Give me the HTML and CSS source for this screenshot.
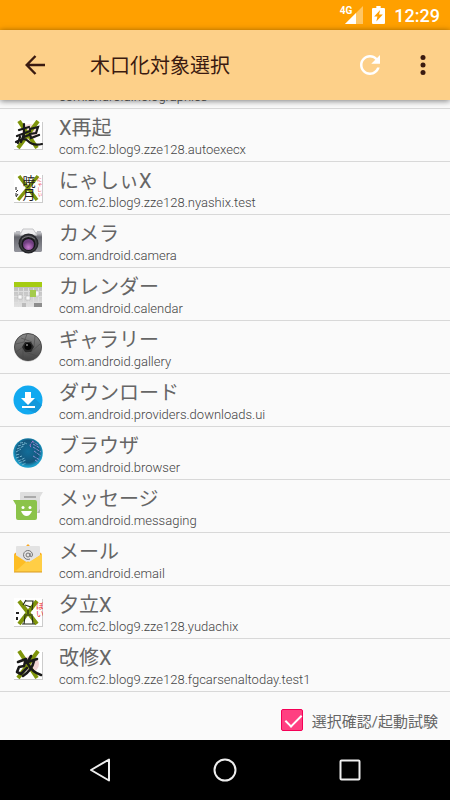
FILE: index.html
```html
<!DOCTYPE html>
<html lang="ja">
<head>
	<meta charset="utf-8">
	<meta name="viewport" content="width=device-width, initial-scale=1">
	<title>木口化対象選択</title>
	<link rel="stylesheet" href="styles.css">
</head>
<body>
	<div class="statusbar">
		<div class="signal">
			<span class="network">4G</span>
			<svg width="18" height="18" viewBox="0 0 18 18">
				<path d="M18 0V18H0Z" fill="#ffc664"/>
				<path d="M11 7V18H0Z" fill="#fff"/>
			</svg>
		</div>
		<svg width="13" height="18" viewBox="0 0 12 18" preserveAspectRatio="none">
			<path d="M4 0h4v2h3a1 1 0 0 1 1 1v14a1 1 0 0 1-1 1H1a1 1 0 0 1-1-1V3a1 1 0 0 1 1-1h3z" fill="#fff"/>
			<path d="M7.500 4L2 10.500H5L4 15.500L10 8.500H6.500Z" fill="#ffa000"/>
		</svg>
		<span class="clock">12:29</span>
	</div>
	<header class="toolbar">
		<button class="icon-btn" aria-label="戻る">
			<svg width="20" height="20" viewBox="0 0 20 20" fill="none" stroke="#3a1a10" stroke-width="2.400">
				<path d="M20 10H2M10.500 1L1.700 10L10.500 19"/>
			</svg>
		</button>
		<h1>木口化対象選択</h1>
		<button class="icon-btn" aria-label="更新">
			<svg width="20" height="20" viewBox="4 4 16 16" fill="#fff">
				<path d="M17.650 6.350C16.200 4.900 14.210 4 12 4c-4.420 0-7.990 3.580-7.990 8s3.570 8 7.990 8c3.730 0 6.840-2.550 7.730-6h-2.080c-.82 2.330-3.040 4-5.650 4-3.310 0-6-2.690-6-6s2.690-6 6-6c1.660 0 3.140.69 4.220 1.780L13 11h7V4l-2.350 2.350z"/>
			</svg>
		</button>
		<button class="icon-btn" aria-label="メニュー">
			<svg width="6" height="20" viewBox="0 0 6 20" fill="#3a1a10">
				<circle cx="3" cy="2.500" r="2.500"/><circle cx="3" cy="10" r="2.500"/><circle cx="3" cy="17.500" r="2.500"/>
			</svg>
		</button>
	</header>

	<ul class="apps" id="apps">
		<li class="app">
			<svg class="icon" viewBox="0 0 30 30"><rect x="1" y="1" width="28" height="28" fill="#fff"/></svg>
			<div class="info"><h2>X</h2><p>com.android.holographics</p></div>
		</li>
		<li class="app">
			<svg class="icon" viewBox="0 0 30 30">
				<rect x="1" y="2" width="29" height="28" fill="#ccc"/>
				<rect x="1" y="1" width="28" height="28" fill="#fff"/>
				<circle cx="17" cy="12" r="8" fill="#f7dcdc"/>
				<path d="M6 1L24 28M25 1L5 28" stroke="#7f950b" stroke-width="4"/>
				<path d="M6 10L16 7M11 4L11 15M4 16L17 11M11 14L8 22M7 17L5 23M11 17L16 15M17 9L25 7L23 13L17 14L18 18L26 15M3 22Q11 17 15 21Q20 26 29 24" fill="none" stroke="#191919" stroke-width="2.200" stroke-linecap="round"/>
			</svg>
			<div class="info"><h2>X再起</h2><p>com.fc2.blog9.zze128.autoexecx</p></div>
		</li>
		<li class="app">
			<svg class="icon" viewBox="0 0 30 30">
				<rect x="1" y="2" width="29" height="28" fill="#ccc"/>
				<rect x="1" y="1" width="28" height="28" fill="#fff"/>
				<path d="M6 3L24 27M25 3L5 27" stroke="#7f950b" stroke-width="3.500"/>
				<text class="kanji" x="15" y="2">暁月</text>
				<text class="kana" x="26" y="4">にゃしぃ</text>
				<path d="M3 14v3M5 17l-2 2M3 20v3M5 21l-2 3" stroke="#222" fill="none"/>
			</svg>
			<div class="info"><h2>にゃしぃX</h2><p>com.fc2.blog9.zze128.nyashix.test</p></div>
		</li>
		<li class="app">
			<svg class="icon" viewBox="0 0 30 30">
				<defs>
					<linearGradient id="camera-body" x2="0" y2="1"><stop stop-color="#d8d8db"/><stop offset=".25" stop-color="#64656c"/><stop offset="1" stop-color="#94959d"/></linearGradient>
					<radialGradient id="lens" cy=".75"><stop stop-color="#c87bcf"/><stop offset="1" stop-color="#703f80"/></radialGradient>
				</defs>
				<path d="M1 6H10V26H2L1 25Z" fill="url(#camera-body)"/>
				<path d="M20 6H28L29 7V25L28 26H20Z" fill="url(#camera-body)"/>
				<path d="M3 5h4v2H3zM24 5h4v2H24z" fill="#b9bac0"/>
				<path d="M7 9L10 3H20L24 9Z" fill="#eeeeef" stroke="#c4c4c7"/>
				<circle cx="15.500" cy="17.500" r="10" fill="#25262a"/>
				<circle cx="15.500" cy="17.500" r="8.500" fill="#3e3e43"/>
				<circle cx="15.500" cy="18" r="7" fill="#17171b"/>
				<circle cx="15.500" cy="18.500" r="5.500" fill="url(#lens)"/>
				<path d="M9 13Q15 8 22 13" fill="none" stroke="#77777b"/>
			</svg>
			<div class="info"><h2>カメラ</h2><p>com.android.camera</p></div>
		</li>
		<li class="app">
			<svg class="icon" viewBox="0 0 30 30">
				<defs>
					<linearGradient id="paper" x2="0" y2="1"><stop stop-color="#b4b4b4"/><stop offset="1" stop-color="#e2e2e2"/></linearGradient>
				</defs>
				<rect x="1" y="3" width="28" height="25" fill="url(#paper)"/>
				<path d="M1 12.500h28M1 17.500h28M1 23.500h28M5.500 9v19M10.500 9v19M15.500 9v19M20.500 9v19M25.500 9v19" stroke="#dedede"/>
				<rect x="1" y="3" width="28" height="5" fill="#a5cc12"/>
				<path d="M5 16h4v4H5zM13 17h4v4h-4zM22 12h4v5h-4z" fill="#fafafa" stroke="#aaa" stroke-width=".5"/>
				<rect x="17" y="11" width="6" height="7" fill="#a4cb4c"/>
				<path d="M21 24h8v4h-8z" fill="#8d8d8d"/><path d="M9 24h4v4H9z" fill="#bbb"/>
			</svg>
			<div class="info"><h2>カレンダー</h2><p>com.android.calendar</p></div>
		</li>
		<li class="app">
			<svg class="icon" viewBox="0 0 30 30">
				<defs>
					<linearGradient id="shutter" x2="0" y2="1"><stop stop-color="#888"/><stop offset="1" stop-color="#444"/></linearGradient>
				</defs>
				<circle cx="15" cy="15.500" r="14" fill="#bbb"/>
				<circle cx="15" cy="15" r="13.500" fill="url(#shutter)" stroke="#4a4a4a"/>
				<path d="M11 10L14 2M19 10L8 6M21 15L22 4M18 20L27 12M12 20L24 24M10 15L10 27M10 15L3 20M11 10L3 12" stroke="#484848" stroke-width=".6"/>
				<path d="M12 10h6l3 5-3 5h-6l-3-5z" fill="#2a2a2a"/>
				<circle cx="15" cy="14.500" r="3.500" fill="#050505"/><circle cx="14" cy="13" r="1" fill="#888"/>
			</svg>
			<div class="info"><h2>ギャラリー</h2><p>com.android.gallery</p></div>
		</li>
		<li class="app">
			<svg class="icon" viewBox="0 0 30 30">
				<circle cx="15" cy="15" r="14.500" fill="#11a9f0"/>
				<path d="M21 13L29 20Q26 26 22 28L9 22Z" fill="#1298db"/>
				<path d="M12 7h6v6h4l-7 7-7-7h4zM9 21h13v2H9z" fill="#fff"/>
			</svg>
			<div class="info"><h2>ダウンロード</h2><p>com.android.providers.downloads.ui</p></div>
		</li>
		<li class="app">
			<svg class="icon" viewBox="0 0 30 30">
				<defs>
					<radialGradient id="globe" cy=".45"><stop stop-color="#126e9a"/><stop offset=".75" stop-color="#14567c"/><stop offset="1" stop-color="#1c9dc9"/></radialGradient>
				</defs>
				<circle cx="15" cy="15" r="14.800" fill="url(#globe)"/>
				<g fill="none" stroke-dasharray="3 1">
					<path d="M7 5Q11 4 14 6M5 8L12 6M4 11L11 8M3 14L8 11M3 17L7 16M3 20L9 18M5 23L12 20M6 25L13 22M9 27L13 25" stroke="#75b5cf"/>
					<path d="M19 3L25 7M20 6L27 10M20 9L28 14M21 13L28 18M20 18L27 22M22 22L25 24" stroke="#8d91d5"/>
					<path d="M20 3L17 7L18 10" stroke="#ad77cf"/>
				</g>
			</svg>
			<div class="info"><h2>ブラウザ</h2><p>com.android.browser</p></div>
		</li>
		<li class="app">
			<svg class="icon" viewBox="0 0 30 30">
				<path d="M7 2Q7 1 8 1H30L27 6V21Q27 22 26 22H7Z" fill="#dedede"/>
				<path d="M24 22L27 18V21Q27 22 26 22Z" fill="#bbb"/>
				<path d="M11 5h12v2H11z" fill="#aaa"/>
				<path d="M0 9H22Q24 9 24 11V27Q24 29 22 29H5Q3 29 3 27V14Z" fill="#8bc34a"/>
				<circle cx="10" cy="16.500" r="1.500" fill="#fff"/><circle cx="17" cy="16.500" r="1.500" fill="#fff"/>
				<path d="M8 20h11Q17 25 13.500 25T8 20z" fill="#fff"/>
			</svg>
			<div class="info"><h2>メッセージ</h2><p>com.android.messaging</p></div>
		</li>
		<li class="app">
			<svg class="icon" viewBox="0 0 30 30">
				<path d="M12 3L15 0L18 3V5H12ZM1 10L5 7V15ZM29 10L25 7V15Z" fill="#f9a825"/>
				<rect x="3" y="2" width="24" height="22" rx="1" fill="#e3e3e3"/>
				<path d="M1 10L15 19L1 28Z" fill="#fdbd24"/>
				<path d="M29 10L15 19L29 28Z" fill="#ffca3c"/>
				<path d="M1 28L13 18Q15 17 17 18L29 28Z" fill="#fdc52f"/>
				<path d="M13 18L15 19L29 10V28H2Z" fill="#ffce45"/>
				<path d="M1 28h28" stroke="#d99a21"/>
				<circle cx="15" cy="11" r="2" fill="none" stroke="#777"/>
				<path d="M17 9v3q2 2 2.500-1A4.500 4.500 0 1 0 17 15" fill="none" stroke="#777"/>
			</svg>
			<div class="info"><h2>メール</h2><p>com.android.email</p></div>
		</li>
		<li class="app">
			<svg class="icon" viewBox="0 0 30 30">
				<rect x="1" y="2" width="29" height="28" fill="#ccc"/>
				<rect x="1" y="1" width="28" height="28" fill="#fff"/>
				<path d="M6 4L24 27M24 4L6 27" stroke="#7f950b" stroke-width="4"/>
				<path d="M13 3L10 8M12 4H20L19 13M12 8L18 10M15 13V17M11 18H20M12 19L11 27M19 19L20 27M9 27H22" fill="none" stroke="#252b1a" stroke-width="1.200"/>
				<text class="kana yudachi" x="26" y="5">ぽい</text>
				<path d="M3 15h3v2H3zM3 20h2v3H3z" fill="#222"/>
			</svg>
			<div class="info"><h2>夕立X</h2><p>com.fc2.blog9.zze128.yudachix</p></div>
		</li>
		<li class="app">
			<svg class="icon" viewBox="0 0 30 30">
				<rect x="1" y="2" width="29" height="28" fill="#ccc"/>
				<rect x="1" y="1" width="28" height="28" fill="#fff"/>
				<circle cx="18" cy="14" r="8" fill="#f0d4d4"/>
				<path d="M6 1L24 28M25 1L5 28" stroke="#7f950b" stroke-width="4"/>
				<path d="M5 12L13 9L11 16L6 17L4 22L8 24L14 18M18 6L14 13M15 12L24 9M21 11Q19 20 10 26M15 14Q19 22 28 25" fill="none" stroke="#191919" stroke-width="2.600" stroke-linecap="round" stroke-linejoin="round"/>
			</svg>
			<div class="info"><h2>改修X</h2><p>com.fc2.blog9.zze128.fgcarsenaltoday.test1</p></div>
		</li>
		<li class="app">
			<svg class="icon" viewBox="0 0 30 30"><rect x="1" y="1" width="28" height="28" fill="#fff"/></svg>
			<div class="info"><h2>時計</h2><p>com.android.deskclock</p></div>
		</li>
	</ul>

	<div class="confirm">
		<input type="checkbox" id="launch-test" checked>
		<label for="launch-test">選択確認/起動試験</label>
	</div>
	<nav class="navbar">
		<button aria-label="戻る"><svg width="24" height="24" viewBox="0 0 24 24"><path d="M21 1.500V22.500L3 12Z"/></svg></button>
		<button aria-label="ホーム"><svg width="24" height="24" viewBox="0 0 24 24"><circle cx="12" cy="12" r="10.500"/></svg></button>
		<button aria-label="最近"><svg width="24" height="24" viewBox="0 0 24 24"><rect x="2.500" y="2.500" width="19" height="19" rx="1"/></svg></button>
	</nav>

	<script>
		document.getElementById("apps").scrollTop = 44;
	</script>
</body>
</html>
```
FILE: styles.css
```css
* {
	box-sizing: border-box;
}
body {
	margin: 0;
	height: 100vh;
	display: flex;
	flex-direction: column;
	background-color: #fafafa;
	font-family: Roboto, "Noto Sans CJK JP", sans-serif;
}
button {
	padding: 0;
	border: 0;
	background: none;
	display: flex;
	align-items: center;
	justify-content: center;
}
.statusbar {
	flex: none;
	height: 30px;
	padding-right: 10px;
	display: flex;
	align-items: center;
	justify-content: flex-end;
	gap: 9px;
	background-color: #ffa000;
	color: #fff;
}
.signal {
	position: relative;
	display: flex;
}
.network {
	position: absolute;
	right: 11px;
	top: -1px;
	font-size: 10px;
	line-height: 12px;
	font-weight: bold;
}
.clock {
	font-size: 18px;
	font-weight: 500;
}
.toolbar {
	flex: none;
	z-index: 1;
	height: 70px;
	padding: 0 8px 0 15px;
	display: flex;
	align-items: center;
	background-color: #fdd089;
	box-shadow: 0 1px 6px rgba(0,0,0,0.5);
}
.toolbar h1 {
	flex: 1;
	margin: 0 0 0 36px;
	padding-top: 2px;
	font-size: 20px;
	line-height: 30px;
	font-weight: 400;
	color: #3a1a10;
}
.icon-btn {
	width: 39px;
	height: 48px;
}
.icon-btn:last-child {
	margin-left: 14px;
}
.apps {
	flex: 1;
	min-height: 0;
	margin: 0;
	padding: 0;
	list-style: none;
	overflow-y: auto;
	scrollbar-width: none;
}
.app {
	height: 53px;
	padding: 0 13px;
	display: flex;
	align-items: center;
	gap: 16px;
	border-bottom: 1px solid #d8d8d8;
}
.icon {
	flex: none;
	width: 30px;
	height: 30px;
}
.info {
	min-width: 0;
	padding-top: 3px;
	white-space: nowrap;
}
.info h2 {
	margin: 0;
	font-size: 20px;
	line-height: 26px;
	font-weight: 400;
	color: #666;
}
.info p {
	margin: 0;
	font-size: 13px;
	line-height: 18px;
	font-weight: 300;
	color: #444;
}
.kanji {
	font-size: 13px;
	fill: #222;
	writing-mode: vertical-rl;
}
.kana {
	font-size: 5px;
	fill: #e33;
	writing-mode: vertical-rl;
}
.yudachi {
	font-size: 8px;
}
.confirm {
	flex: none;
	height: 40px;
	padding: 0 12px;
	display: flex;
	align-items: center;
	justify-content: flex-end;
	gap: 9px;
	font-size: 15px;
	color: #666;
}
.confirm input {
	appearance: none;
	width: 22px;
	height: 22px;
	margin: 0;
	border: 1px solid #f50057;
	border-radius: 2px;
}
.confirm input:checked {
	background-color: #ff4081;
}
.confirm input:checked::before {
	content: "";
	display: block;
	width: 7px;
	height: 14px;
	margin: 1px 0 0 7px;
	border: solid #fff;
	border-width: 0 2px 2px 0;
	transform: rotate(45deg);
}
.navbar {
	flex: none;
	height: 60px;
	display: flex;
	justify-content: center;
	gap: 25px;
	background-color: #000;
}
.navbar button {
	width: 100px;
}
.navbar svg {
	fill: none;
	stroke: #eee;
	stroke-width: 2;
	stroke-linejoin: round;
}
```
